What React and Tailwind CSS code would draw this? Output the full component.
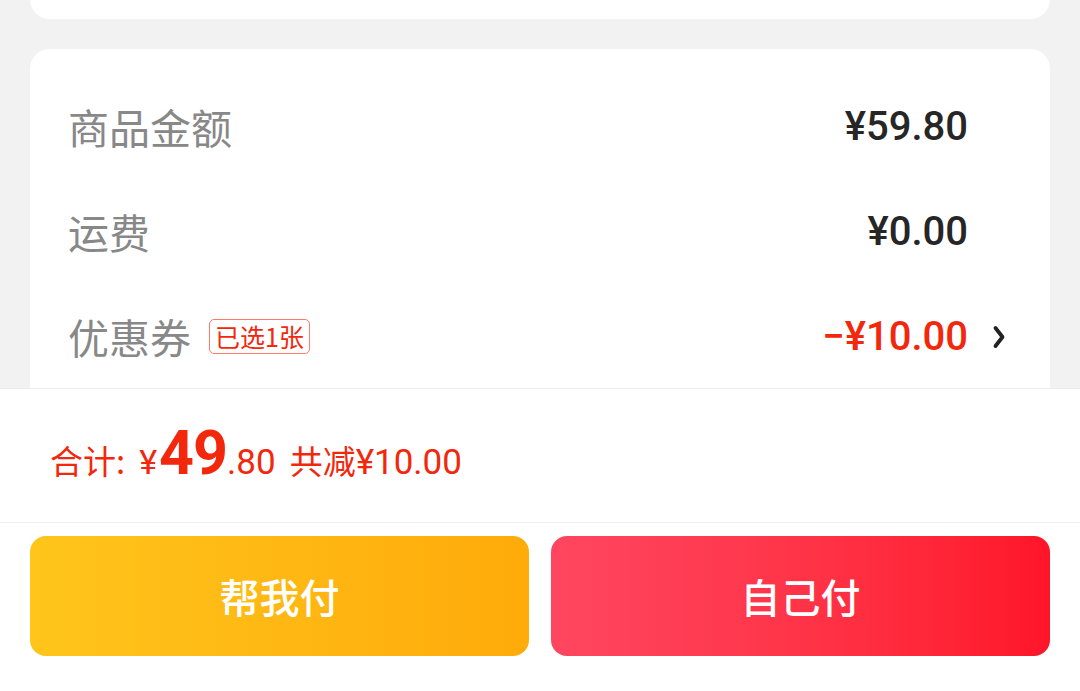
export default function App() {
  const cjk = { fontFamily: '"Noto Sans CJK SC", "Noto Sans", sans-serif' };
  const num = { fontFamily: 'Roboto, "Noto Sans CJK SC", sans-serif' };

  return (
    <div className="h-[691px] w-[1080px] bg-[#f2f2f2] flex flex-col overflow-hidden" style={cjk}>
      {/* Scrollable content */}
      <div className="flex-1 min-h-0 overflow-hidden px-[30px]">
        {/* Previous card (cut off) */}
        <div className="-mt-[100px] h-[119px] bg-white rounded-[20px]" />

        {/* Price details card */}
        <div className="mt-[30px] bg-white rounded-[20px] pt-[25px] pl-[38px] pr-[38px] pb-[40px]">
          <div className="h-[105px] flex items-center">
            <span className="text-[41px] text-[#888888] leading-none">商品金额</span>
            <span className="ml-auto text-[40px] font-medium text-[#262626] leading-none" style={num}>¥59.80</span>
            <span className="w-[44px]" />
          </div>
          <div className="h-[105px] flex items-center">
            <span className="text-[41px] text-[#888888] leading-none">运费</span>
            <span className="ml-auto text-[40px] font-medium text-[#262626] leading-none" style={num}>¥0.00</span>
            <span className="w-[44px]" />
          </div>
          <div className="h-[105px] flex items-center">
            <span className="text-[41px] text-[#888888] leading-none">优惠券</span>
            <span className="ml-[18px] h-[35px] px-[5px] flex items-center border border-[#ff7a6a] rounded-[5px] text-[25px] text-[#f2270c] leading-none">
              已选1张
            </span>
            <span className="ml-auto text-[40px] font-medium text-[#f2270c] leading-none" style={num}>−¥10.00</span>
            <span className="w-[44px] flex justify-end pr-[6px]">
              <svg width="14" height="26" viewBox="0 0 14 26" fill="none">
                <path d="M3.5 4l7 9-7 9" stroke="#222222" strokeWidth="3.8" strokeLinecap="round" strokeLinejoin="round" />
              </svg>
            </span>
          </div>
        </div>
      </div>

      {/* Bottom bar */}
      <div className="bg-white border-t border-[#ececec]">
        <div className="h-[133px] flex items-baseline pl-[50px] pt-[34px] text-[#f2270c]">
          <span className="text-[33px] leading-none">合计:</span>
          <span className="ml-[14px] flex items-baseline leading-none" style={num}>
            <span className="text-[34px]">¥</span>
            <span className="ml-[2px] text-[61px] font-bold tracking-[-1px]">49</span>
            <span className="text-[35px]">.80</span>
          </span>
          <span className="ml-[14px] text-[33px] leading-none">共减</span>
          <span className="text-[35px] leading-none" style={num}>¥10.00</span>
        </div>
        <div className="h-[169px] border-t border-[#f2f2f2] px-[30px] pt-[13px] flex gap-[22px]">
          <button className="flex-1 h-[120px] rounded-[16px] bg-gradient-to-r from-[#ffc51b] to-[#ffab09] text-white text-[40px] font-medium">
            帮我付
          </button>
          <button className="flex-1 h-[120px] rounded-[16px] bg-gradient-to-r from-[#ff4660] to-[#ff1428] text-white text-[40px] font-medium">
            自己付
          </button>
        </div>
      </div>
    </div>
  );
}
